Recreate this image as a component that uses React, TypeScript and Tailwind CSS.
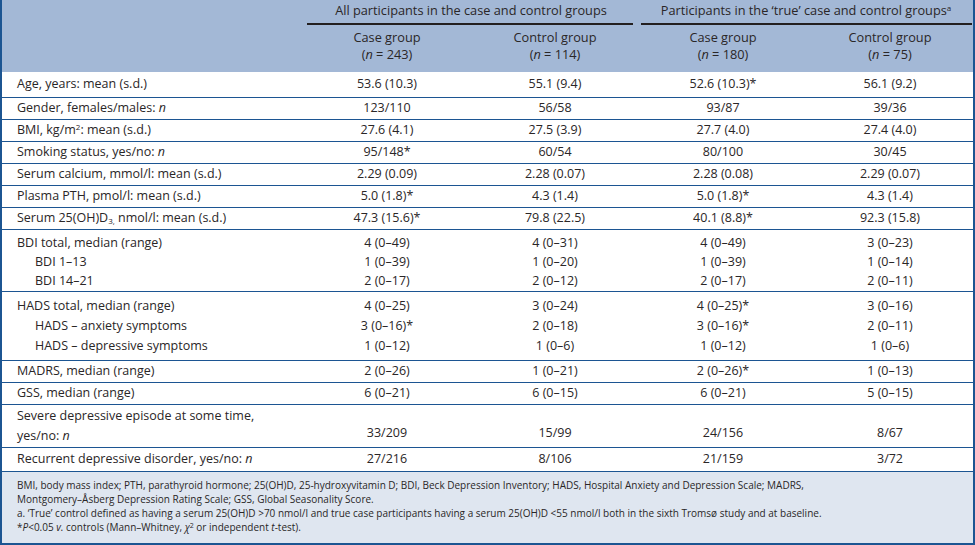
import React from "react"

type Row = { label: React.ReactNode; v: string[]; indent?: boolean }

const font = { fontFamily: '"Open Sans", "Liberation Sans", sans-serif' }

const basic: Row[] = [
  { label: <>Gender, females/males: <i>n</i></>, v: ["123/110", "56/58", "93/87", "39/36"] },
  { label: <>BMI, kg/m<sup className="text-[8px]">2</sup>: mean (s.d.)</>, v: ["27.6 (4.1)", "27.5 (3.9)", "27.7 (4.0)", "27.4 (4.0)"] },
  { label: <>Smoking status, yes/no: <i>n</i></>, v: ["95/148*", "60/54", "80/100", "30/45"] },
  { label: "Serum calcium, mmol/l: mean (s.d.)", v: ["2.29 (0.09)", "2.28 (0.07)", "2.28 (0.08)", "2.29 (0.07)"] },
  { label: "Plasma PTH, pmol/l: mean (s.d.)", v: ["5.0 (1.8)*", "4.3 (1.4)", "5.0 (1.8)*", "4.3 (1.4)"] },
  { label: <>Serum 25(OH)D<sub className="text-[8px]">3,</sub> nmol/l: mean (s.d.)</>, v: ["47.3 (15.6)*", "79.8 (22.5)", "40.1 (8.8)*", "92.3 (15.8)"] },
]

const bdi: Row[] = [
  { label: "BDI total, median (range)", v: ["4 (0–49)", "4 (0–31)", "4 (0–49)", "3 (0–23)"] },
  { label: "BDI 1–13", v: ["1 (0–39)", "1 (0–20)", "1 (0–39)", "1 (0–14)"], indent: true },
  { label: "BDI 14–21", v: ["2 (0–17)", "2 (0–12)", "2 (0–17)", "2 (0–11)"], indent: true },
]

const hads: Row[] = [
  { label: "HADS total, median (range)", v: ["4 (0–25)", "3 (0–24)", "4 (0–25)*", "3 (0–16)"] },
  { label: "HADS – anxiety symptoms", v: ["3 (0–16)*", "2 (0–18)", "3 (0–16)*", "2 (0–11)"], indent: true },
  { label: "HADS – depressive symptoms", v: ["1 (0–12)", "1 (0–6)", "1 (0–12)", "1 (0–6)"], indent: true },
]

const grid = "grid grid-cols-[301px_168px_168px_168px_1fr]"

function Line({ row, h }: { row: Row; h: string }) {
  return (
    <div className={`${grid} items-center ${h}`}>
      <div className={row.indent ? "pl-[33px]" : "pl-[15px]"}>{row.label}</div>
      {row.v.map((x, i) => (
        <div key={i} className="text-center">{x}</div>
      ))}
    </div>
  )
}

export default function App() {
  return (
    <div className="w-[975px] h-[545px] bg-white text-[#2a2627] text-[12.5px] leading-none border-x-2 border-b-2 border-[#1c5592] flex flex-col" style={font}>
      {/* header */}
      <div className="bg-[#a3b8d6] h-[72px] flex flex-col">
        <div className={`${grid} h-[25px]`}>
          <div />
          <div className="col-span-2 flex flex-col justify-end">
            <div className="text-center text-[12.75px] pb-[6px]">All participants in the case and control groups</div>
            <div className="h-[2px] bg-[#231f20] ml-[4px] mr-[6px]" />
          </div>
          <div className="col-span-2 flex flex-col justify-end">
            <div className="text-center text-[12.75px] pb-[6px]">
              Participants in the ‘true’ case and control groups<sup className="text-[8px]">a</sup>
            </div>
            <div className="h-[2px] bg-[#231f20] ml-[2px] mr-[1px]" />
          </div>
        </div>
        <div className={`${grid} pt-[4px]`}>
          <div />
          {[["Case group", "243"], ["Control group", "114"], ["Case group", "180"], ["Control group", "75"]].map(([t, n], i) => (
            <div key={i} className="text-center text-[12.75px] leading-[17px]">
              <div>{t}</div>
              <div>(<i>n</i> = {n})</div>
            </div>
          ))}
        </div>
      </div>

      <div className="border-b border-[#1c5592]">
        <Line row={{ label: "Age, years: mean (s.d.)", v: ["53.6 (10.3)", "55.1 (9.4)", "52.6 (10.3)*", "56.1 (9.2)"] }} h="h-[25px]" />
      </div>
      {basic.map((r, i) => (
        <div key={i} className="border-b border-[#1c5592]">
          <Line row={r} h="h-[21px]" />
        </div>
      ))}
      <div className="border-b border-[#1c5592] pt-[4px]">
        {bdi.map((r, i) => <Line key={i} row={r} h="h-[19px]" />)}
      </div>
      <div className="border-b border-[#1c5592] pt-[4px] pb-[4px]">
        {hads.map((r, i) => <Line key={i} row={r} h="h-[20px]" />)}
      </div>
      <div className="border-b border-[#1c5592]">
        <Line row={{ label: "MADRS, median (range)", v: ["2 (0–26)", "1 (0–21)", "2 (0–26)*", "1 (0–13)"] }} h="h-[21px]" />
      </div>
      <div className="border-b border-[#1c5592]">
        <Line row={{ label: "GSS, median (range)", v: ["6 (0–21)", "6 (0–15)", "6 (0–21)", "5 (0–15)"] }} h="h-[21px]" />
      </div>
      <div className={`${grid} border-b border-[#1c5592] h-[43px]`}>
        <div className="pl-[15px] flex flex-col justify-center gap-[8px]">
          <div>Severe depressive episode at some time,</div>
          <div>yes/no: <i>n</i></div>
        </div>
        {["33/209", "15/99", "24/156", "8/67"].map((x, i) => (
          <div key={i} className="text-center self-end pb-[8px]">{x}</div>
        ))}
      </div>
      <div className="border-b border-[#1c5592]">
        <Line row={{ label: <>Recurrent depressive disorder, yes/no: <i>n</i></>, v: ["27/216", "8/106", "21/159", "3/72"] }} h="h-[23px]" />
      </div>

      {/* footnotes */}
      <div className="flex-1 bg-[#dfe6f0] pl-[15px] pt-[6px]">
        <div className="text-[10px] leading-[14px]">
          BMI, body mass index; PTH, parathyroid hormone; 25(OH)D, 25-hydroxyvitamin D; BDI, Beck Depression Inventory; HADS, Hospital Anxiety and Depression Scale; MADRS,
        </div>
        <div className="text-[10px] leading-[14px]">Montgomery–Åsberg Depression Rating Scale; GSS, Global Seasonality Score.</div>
        <div className="text-[10px] leading-[14px]">
          a. ‘True’ control defined as having a serum 25(OH)D &gt;70 nmol/l and true case participants having a serum 25(OH)D &lt;55 nmol/l both in the sixth Tromsø study and at baseline.
        </div>
        <div className="text-[10px] leading-[14px]">
          *<i>P</i>&lt;0.05 <i>v.</i> controls (Mann–Whitney, <i>χ</i>
          <sup className="text-[7px] leading-none">2</sup> or independent <i>t</i>-test).
        </div>
      </div>
    </div>
  )
}
